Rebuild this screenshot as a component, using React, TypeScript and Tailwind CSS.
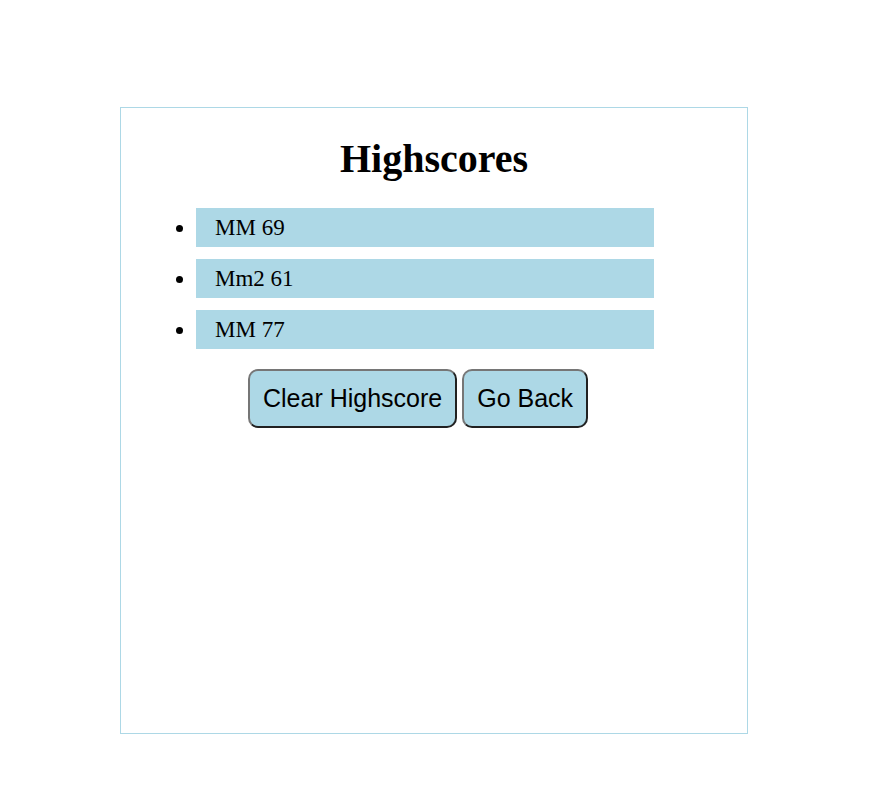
const scores = [
  { initials: 'MM', score: 69 },
  { initials: 'Mm2', score: 61 },
  { initials: 'MM', score: 77 },
];

const buttonClass =
  "h-[59px] rounded-[10px] border-2 border-t-[#767676] border-l-[#767676] border-r-[#212121] border-b-[#212121] bg-[#add8e6] px-[13px] font-['Liberation_Sans',Arial,sans-serif] text-[25px] text-black whitespace-nowrap";

export default function App() {
  return (
    <div className="pt-[107px] pr-[143px] pb-[71px] pl-[120px] font-['Liberation_Serif','Times_New_Roman',serif] text-black">
      <main className="min-h-[627px] border border-[#add8e6] pt-7">
        <h1 className="text-center text-[40px] leading-[46px] font-bold">Highscores</h1>
        <ul className="mt-[26px] mr-[93px] ml-[75px] flex list-disc flex-col gap-3 text-[23px] leading-[39px]">
          {scores.map((entry, index) => (
            <li key={index} className="bg-[#add8e6] pl-[19px]">
              {entry.initials} {entry.score}
            </li>
          ))}
        </ul>
        <div className="mt-5 flex gap-[5px] pl-[127px]">
          <button type="button" className={buttonClass}>Clear Highscore</button>
          <button type="button" className={buttonClass}>Go Back</button>
        </div>
      </main>
    </div>
  );
}
